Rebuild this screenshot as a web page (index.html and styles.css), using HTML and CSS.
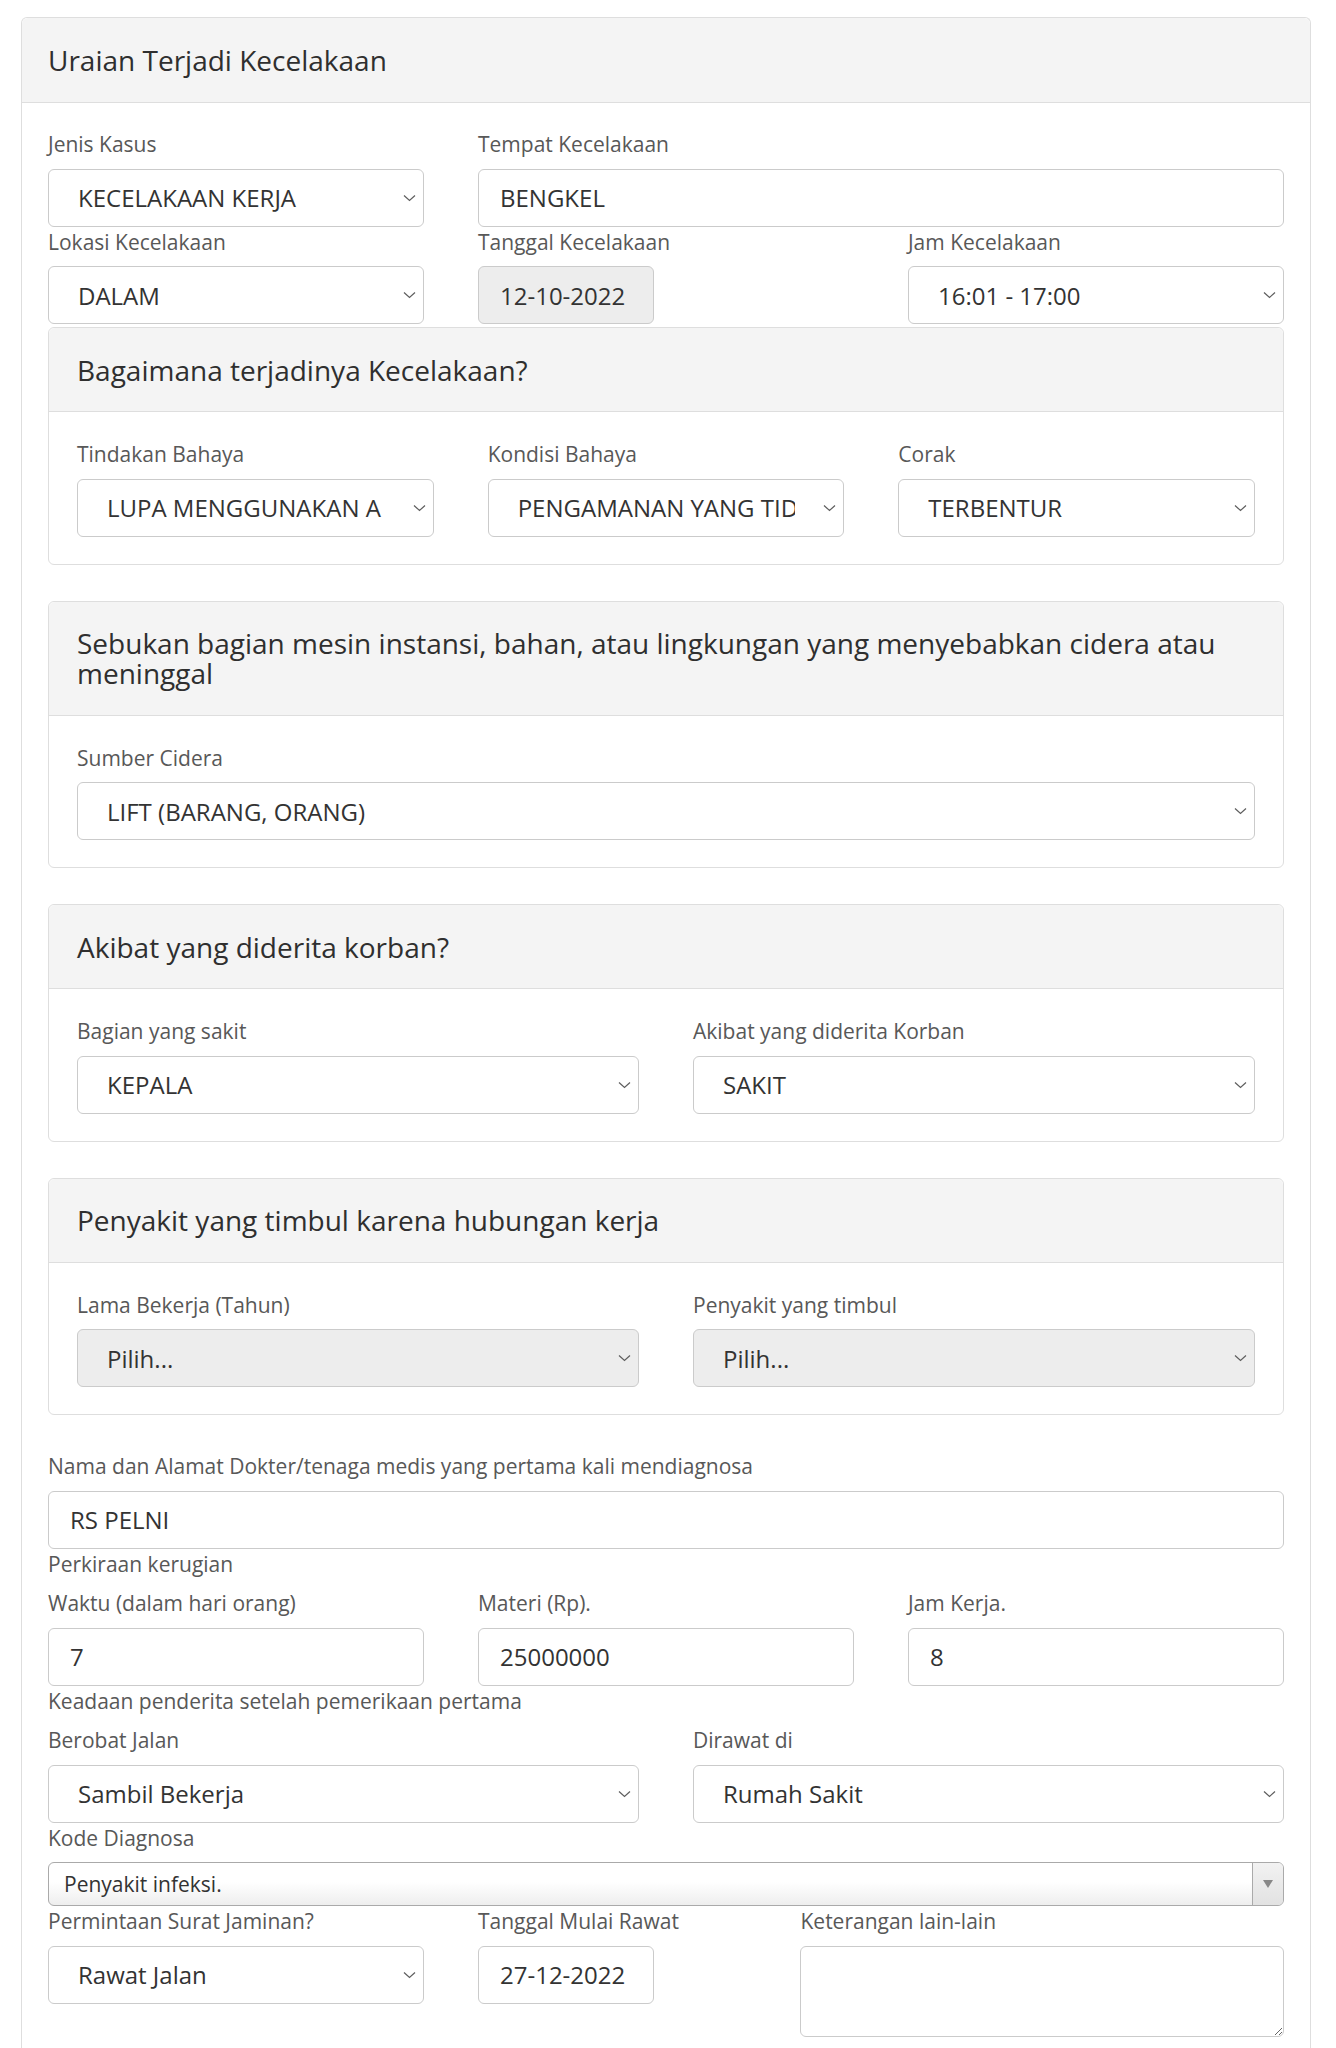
FILE: index.html
```html
<!DOCTYPE html>
<html lang="id">
<head>
<meta charset="utf-8">
<title>Uraian Terjadi Kecelakaan</title>
<link rel="stylesheet" href="styles.css">
</head>
<body>
<div class="page">
  <section class="card card-outer">
    <div class="card-header"><h3 class="card-title">Uraian Terjadi Kecelakaan</h3></div>
    <div class="card-body">
      <div class="row">
        <div class="col col-4">
          <label class="label">Jenis Kasus</label>
          <div class="select-wrap">
            <select class="control select"><option>KECELAKAAN KERJA</option></select>
            <svg class="chev" width="13" height="8" viewBox="0 0 13 8"><path d="M1 1.5 L6.5 6.5 L12 1.5" /></svg>
          </div>
        </div>
        <div class="col col-8">
          <label class="label">Tempat Kecelakaan</label>
          <input class="control input" type="text" value="BENGKEL">
        </div>
      </div>
      <div class="row">
        <div class="col col-4">
          <label class="label">Lokasi Kecelakaan</label>
          <div class="select-wrap">
            <select class="control select"><option>DALAM</option></select>
            <svg class="chev" width="13" height="8" viewBox="0 0 13 8"><path d="M1 1.5 L6.5 6.5 L12 1.5" /></svg>
          </div>
        </div>
        <div class="col col-4">
          <label class="label">Tanggal Kecelakaan</label>
          <input class="control input input-date is-readonly" type="text" value="12-10-2022" readonly>
        </div>
        <div class="col col-4">
          <label class="label">Jam Kecelakaan</label>
          <div class="select-wrap">
            <select class="control select"><option>16:01 - 17:00</option></select>
            <svg class="chev" width="13" height="8" viewBox="0 0 13 8"><path d="M1 1.5 L6.5 6.5 L12 1.5" /></svg>
          </div>
        </div>
      </div>

      <section class="card card-inner card-first">
        <div class="card-header"><h4 class="card-title">Bagaimana terjadinya Kecelakaan?</h4></div>
        <div class="card-body card-body-inner">
          <div class="row">
            <div class="col col-4">
              <label class="label">Tindakan Bahaya</label>
              <div class="select-wrap">
                <select class="control select"><option>LUPA MENGGUNAKAN A PD</option></select>
                <svg class="chev" width="13" height="8" viewBox="0 0 13 8"><path d="M1 1.5 L6.5 6.5 L12 1.5" /></svg>
              </div>
            </div>
            <div class="col col-4">
              <label class="label">Kondisi Bahaya</label>
              <div class="select-wrap">
                <select class="control select"><option>PENGAMANAN YANG TIDAK SEMPURNA</option></select>
                <svg class="chev" width="13" height="8" viewBox="0 0 13 8"><path d="M1 1.5 L6.5 6.5 L12 1.5" /></svg>
              </div>
            </div>
            <div class="col col-4">
              <label class="label">Corak</label>
              <div class="select-wrap">
                <select class="control select"><option>TERBENTUR</option></select>
                <svg class="chev" width="13" height="8" viewBox="0 0 13 8"><path d="M1 1.5 L6.5 6.5 L12 1.5" /></svg>
              </div>
            </div>
          </div>
        </div>
      </section>

      <section class="card card-inner">
        <div class="card-header"><h4 class="card-title">Sebukan bagian mesin instansi, bahan, atau lingkungan yang menyebabkan cidera atau meninggal</h4></div>
        <div class="card-body card-body-inner">
          <label class="label">Sumber Cidera</label>
          <div class="select-wrap">
            <select class="control select"><option>LIFT (BARANG, ORANG)</option></select>
            <svg class="chev" width="13" height="8" viewBox="0 0 13 8"><path d="M1 1.5 L6.5 6.5 L12 1.5" /></svg>
          </div>
        </div>
      </section>

      <section class="card card-inner">
        <div class="card-header"><h4 class="card-title">Akibat yang diderita korban?</h4></div>
        <div class="card-body card-body-inner">
          <div class="row">
            <div class="col col-6">
              <label class="label">Bagian yang sakit</label>
              <div class="select-wrap">
                <select class="control select"><option>KEPALA</option></select>
                <svg class="chev" width="13" height="8" viewBox="0 0 13 8"><path d="M1 1.5 L6.5 6.5 L12 1.5" /></svg>
              </div>
            </div>
            <div class="col col-6">
              <label class="label">Akibat yang diderita Korban</label>
              <div class="select-wrap">
                <select class="control select"><option>SAKIT</option></select>
                <svg class="chev" width="13" height="8" viewBox="0 0 13 8"><path d="M1 1.5 L6.5 6.5 L12 1.5" /></svg>
              </div>
            </div>
          </div>
        </div>
      </section>

      <section class="card card-inner">
        <div class="card-header"><h4 class="card-title">Penyakit yang timbul karena hubungan kerja</h4></div>
        <div class="card-body card-body-inner">
          <div class="row">
            <div class="col col-6">
              <label class="label">Lama Bekerja (Tahun)</label>
              <div class="select-wrap">
                <select class="control select is-disabled" disabled><option>Pilih...</option></select>
                <svg class="chev" width="13" height="8" viewBox="0 0 13 8"><path d="M1 1.5 L6.5 6.5 L12 1.5" /></svg>
              </div>
            </div>
            <div class="col col-6">
              <label class="label">Penyakit yang timbul</label>
              <div class="select-wrap">
                <select class="control select is-disabled" disabled><option>Pilih...</option></select>
                <svg class="chev" width="13" height="8" viewBox="0 0 13 8"><path d="M1 1.5 L6.5 6.5 L12 1.5" /></svg>
              </div>
            </div>
          </div>
        </div>
      </section>

      <label class="label">Nama dan Alamat Dokter/tenaga medis yang pertama kali mendiagnosa</label>
      <input class="control input" type="text" value="RS PELNI">

      <label class="label">Perkiraan kerugian</label>
      <div class="row">
        <div class="col col-4">
          <label class="label">Waktu (dalam hari orang)</label>
          <input class="control input" type="text" value="7">
        </div>
        <div class="col col-4">
          <label class="label">Materi (Rp).</label>
          <input class="control input" type="text" value="25000000">
        </div>
        <div class="col col-4">
          <label class="label">Jam Kerja.</label>
          <input class="control input" type="text" value="8">
        </div>
      </div>

      <label class="label">Keadaan penderita setelah pemerikaan pertama</label>
      <div class="row">
        <div class="col col-6">
          <label class="label">Berobat Jalan</label>
          <div class="select-wrap">
            <select class="control select"><option>Sambil Bekerja</option></select>
            <svg class="chev" width="13" height="8" viewBox="0 0 13 8"><path d="M1 1.5 L6.5 6.5 L12 1.5" /></svg>
          </div>
        </div>
        <div class="col col-6">
          <label class="label">Dirawat di</label>
          <div class="select-wrap">
            <select class="control select"><option>Rumah Sakit</option></select>
            <svg class="chev" width="13" height="8" viewBox="0 0 13 8"><path d="M1 1.5 L6.5 6.5 L12 1.5" /></svg>
          </div>
        </div>
      </div>

      <label class="label">Kode Diagnosa</label>
      <div class="combo">
        <span class="combo-text">Penyakit infeksi.</span>
        <span class="combo-arrow"><svg width="10" height="8" viewBox="0 0 10 8"><path d="M0 0 H10 L5 8 Z" /></svg></span>
      </div>

      <div class="row">
        <div class="col col-4">
          <label class="label">Permintaan Surat Jaminan?</label>
          <div class="select-wrap">
            <select class="control select"><option>Rawat Jalan</option></select>
            <svg class="chev" width="13" height="8" viewBox="0 0 13 8"><path d="M1 1.5 L6.5 6.5 L12 1.5" /></svg>
          </div>
        </div>
        <div class="col col-3">
          <label class="label">Tanggal Mulai Rawat</label>
          <input class="control input input-date" type="text" value="27-12-2022">
        </div>
        <div class="col col-5">
          <label class="label">Keterangan lain-lain</label>
          <textarea class="control textarea"></textarea>
        </div>
      </div>
    </div>
  </section>
</div>
</body>
</html>
```

FILE: styles.css
```css
* {
  box-sizing: border-box;
}

html,
body {
  margin: 0;
  background: #ffffff;
}

body {
  font-family: "Open Sans", "Noto Sans", "Liberation Sans", sans-serif;
  color: #333333;
}

.page {
  padding: 17px 25px 0 21px;
}

.card {
  border: 1px solid #dedede;
  border-radius: 6px;
  background: #ffffff;
}

.card-outer {
  border-bottom: none;
  border-radius: 6px 6px 0 0;
}

.card-header {
  background: #f4f4f4;
  border-bottom: 1px solid #dedede;
  border-radius: 6px 6px 0 0;
  padding: 27px 26px;
}

.card-inner .card-header {
  padding: 26.5px 28px;
}

.card-title {
  margin: 0;
  font-size: 28px;
  line-height: 30px;
  font-weight: 400;
  color: #2f2f2f;
}

.card-body {
  padding: 26px 26px 40px;
}

.card-body-inner {
  padding: 27px 28px 27px;
}

.card-inner {
  margin-bottom: 36px;
}

.card-first {
  margin-top: 3px;
}

.row {
  display: flex;
  margin: 0 -27px;
}

.col {
  padding: 0 27px;
  min-width: 0;
}

.col-3 { width: 25%; }
.col-4 { width: 33.3333%; }
.col-5 { width: 41.6667%; }
.col-6 { width: 50%; }
.col-8 { width: 66.6667%; }

.label {
  display: block;
  font-size: 21px;
  line-height: 31.5px;
  color: #585858;
  margin-bottom: 8px;
}

.control {
  display: block;
  width: 100%;
  height: 58px;
  margin: 0;
  border: 1px solid #cbcbcb;
  border-radius: 6px;
  background: #ffffff;
  font-family: inherit;
  font-size: 24px;
  color: #333333;
  outline: none;
}

.input {
  padding: 0 21px;
}

.input-date {
  width: 176px;
}

.is-readonly {
  background: #ededed;
}

.select-wrap {
  position: relative;
}

.select {
  -webkit-appearance: none;
  appearance: none;
  padding: 0 48px 0 29px;
}

.select.is-disabled {
  background: #ededed;
  color: #333333;
  opacity: 1;
}

.chev {
  position: absolute;
  right: 8px;
  top: 50%;
  margin-top: -4px;
  pointer-events: none;
}

.chev path {
  fill: none;
  stroke: #5e5e5e;
  stroke-width: 1.2;
}

.combo {
  display: flex;
  align-items: stretch;
  height: 44px;
  border: 1px solid #aaaaaa;
  border-radius: 6px;
  background: linear-gradient(to bottom, #ffffff 0%, #ffffff 45%, #eeeeee 100%);
  overflow: hidden;
}

.combo-text {
  flex: 1;
  padding-left: 15px;
  font-size: 21px;
  line-height: 42px;
  color: #333333;
}

.combo-arrow {
  width: 31px;
  display: flex;
  align-items: center;
  justify-content: center;
  border-left: 1px solid #aaaaaa;
  background: linear-gradient(to bottom, #f2f2f2 0%, #e2e2e2 100%);
}

.combo-arrow path {
  fill: #888888;
}

.textarea {
  height: 91px;
  padding: 10px 21px;
  resize: vertical;
}
```
